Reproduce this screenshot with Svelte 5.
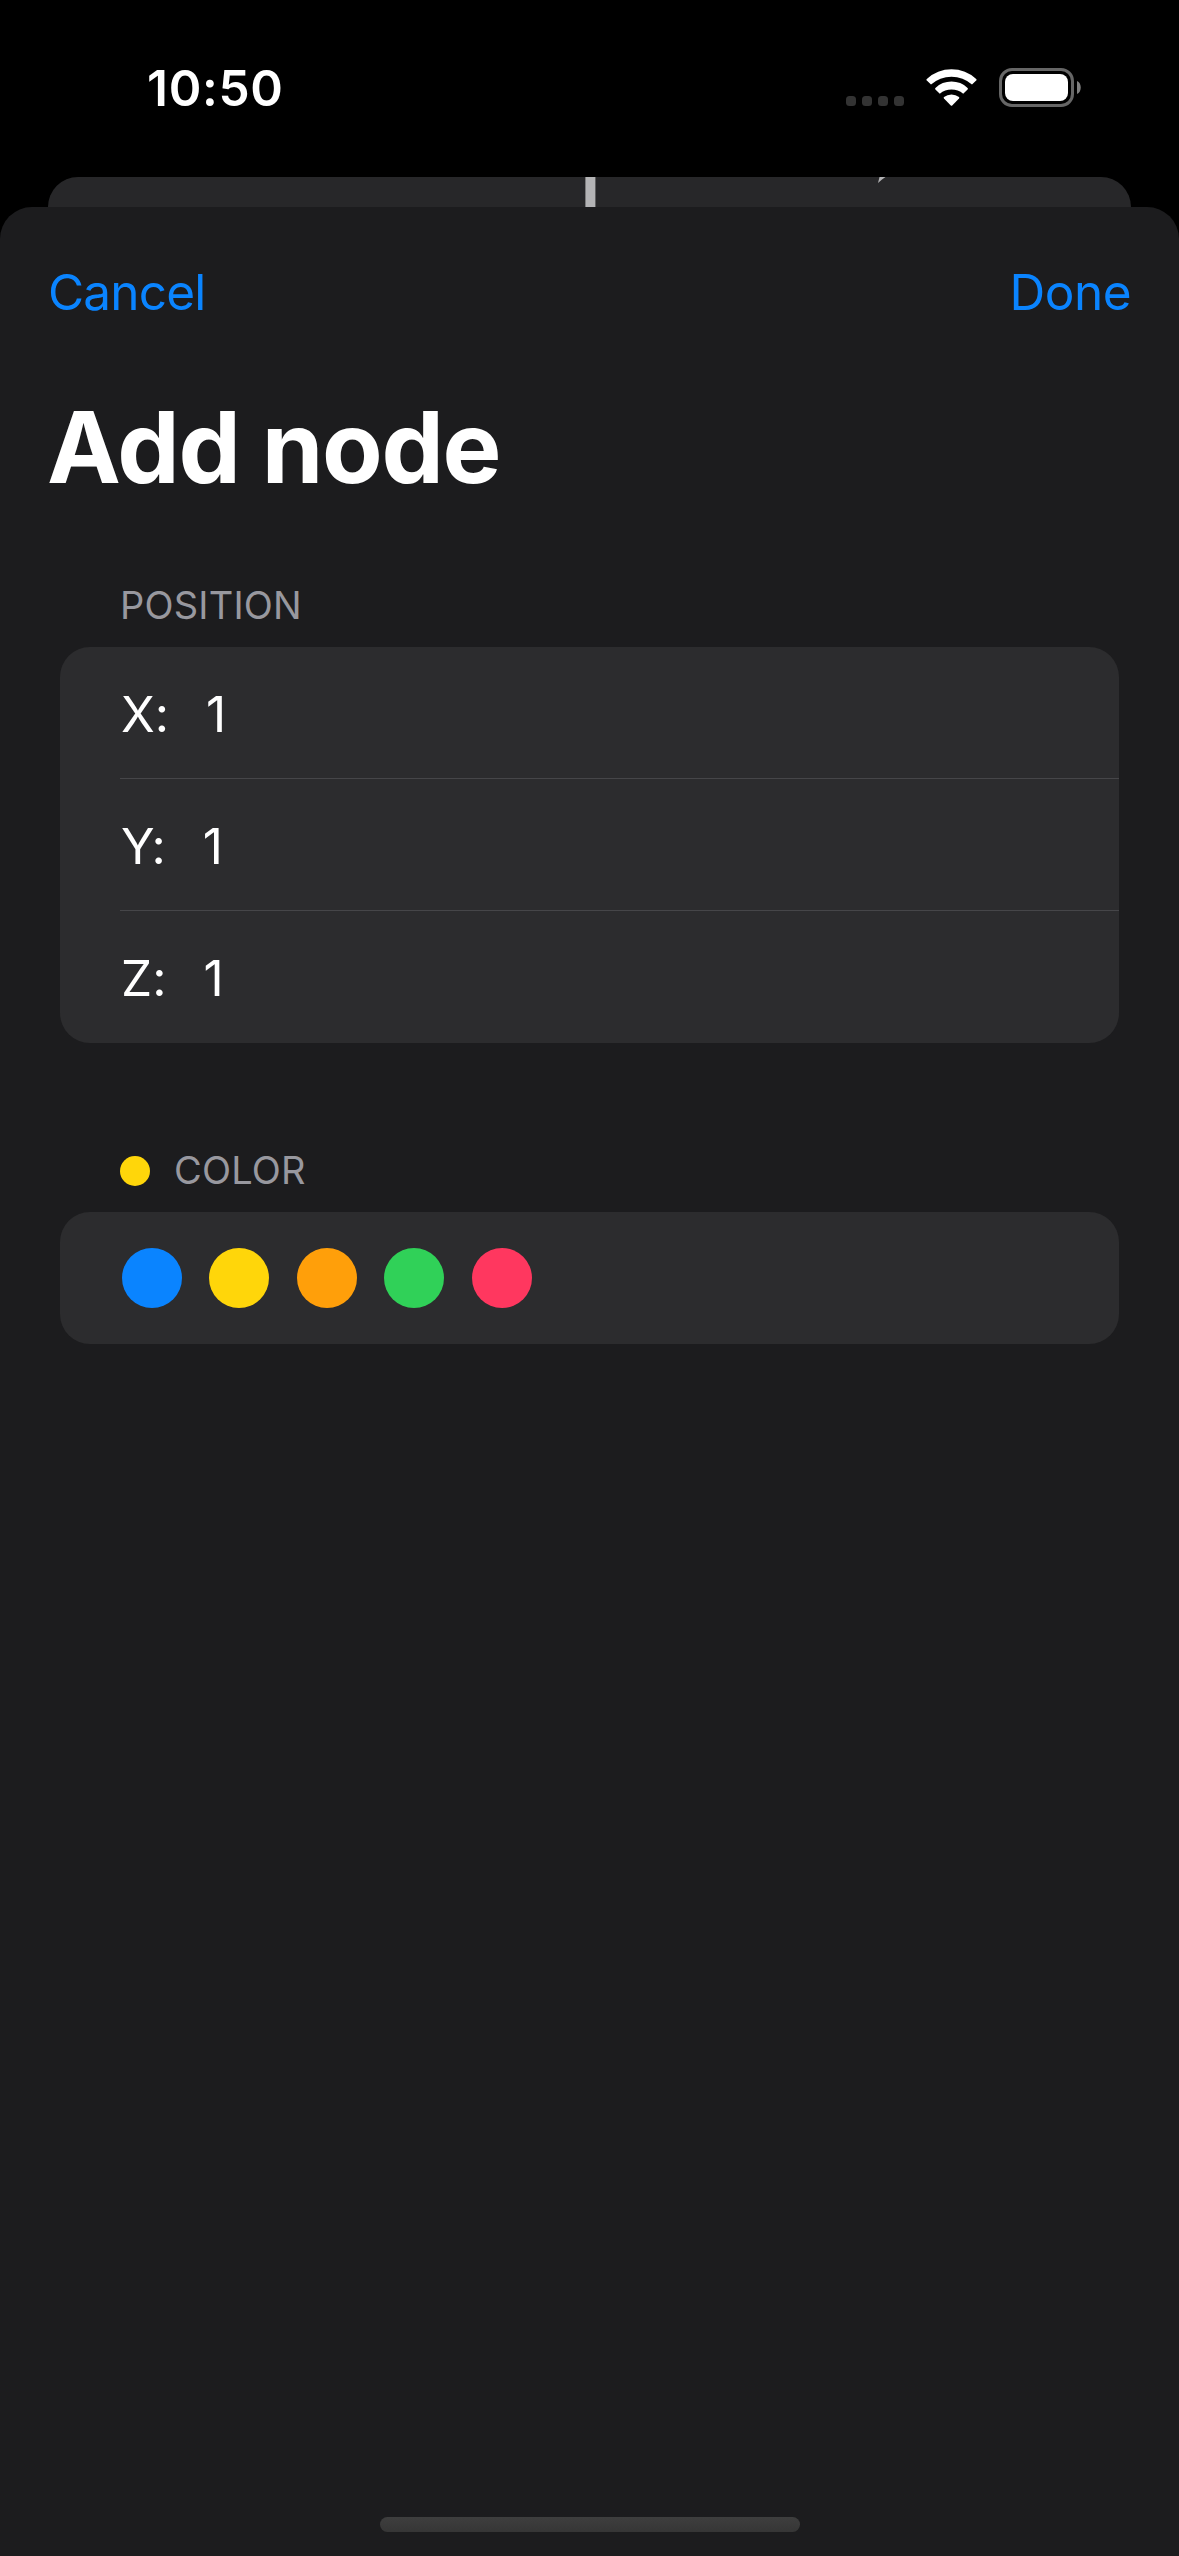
<script>
  let fields = $state([
    { label: 'X:', value: '1' },
    { label: 'Y:', value: '1' },
    { label: 'Z:', value: '1' }
  ]);
  const colors = ['blue', 'yellow', 'orange', 'green', 'pink'];
  let selected = $state('yellow');
</script>

<div class="screen">
  <header class="status">
    <span class="time">10:50</span>
    <div class="indicators">
      <div class="cellular"><i></i><i></i><i></i><i></i></div>
      <svg class="wifi" width="51" height="38" viewBox="0 0 51 38" fill="#fff">
        <path d="M.8 11.6Q0 10.8.8 10A36.5 36.5 0 0 1 50.2 10Q51 10.8 50.2 11.6L46 15.6A30.5 30.5 0 0 0 5 15.6Z" />
        <path d="M9.4 20.5Q8.7 19.8 9.4 19A22.9 22.9 0 0 1 41.6 19Q42.3 19.8 41.6 20.5L37.2 24.7A18.5 18.5 0 0 0 13.8 24.7Z" />
        <path d="M18 29.5Q17.3 28.7 18 28.1A12 12 0 0 1 33 28.1Q33.7 28.7 33 29.5L26.2 36.4Q25.5 37.1 24.8 36.4Z" />
      </svg>
      <svg class="battery" width="83" height="39" viewBox="0 0 83 39">
        <rect x="1.5" y="1.5" width="72" height="36" rx="11.5" fill="none" stroke="#666" stroke-width="3" />
        <rect x="6" y="6" width="63" height="27" rx="8" fill="#fff" />
        <path d="M78 13C83 15 83 24 78 26Z" fill="#808080" />
      </svg>
    </div>
  </header>

  <div class="backdrop">
    <svg width="1083" height="30" viewBox="0 0 1083 30">
      <rect x="537.4" y="0" width="10" height="30" fill="#b3b3b5" />
      <path d="M831.5 0H837.5L834 2.5L830 6Z" fill="#b3b3b5" />
    </svg>
  </div>

  <main class="sheet">
    <nav>
      <button class="cancel">Cancel</button>
      <button class="done">Done</button>
    </nav>
    <h1>Add node</h1>

    <section>
      <h2>POSITION</h2>
      <div class="card">
        {#each fields as field}
          <div class="row">
            <span class="label">{field.label}</span>
            <span class="value">{field.value}</span>
          </div>
        {/each}
      </div>
    </section>

    <section class="color">
      <h2><span class="dot {selected}"></span><span>COLOR</span></h2>
      <div class="card swatches">
        {#each colors as color}
          <button class="swatch {color}" aria-label={color} onclick={() => (selected = color)}></button>
        {/each}
      </div>
    </section>

    <div class="home"></div>
  </main>
</div>

<style>
  :global(body) {
    margin: 0;
    background: #000;
  }
  .screen {
    display: flex;
    flex-direction: column;
    width: 1179px;
    height: 2556px;
    overflow: hidden;
    background: #000;
    color: #fff;
    font-family: Inter, "Liberation Sans", sans-serif;
    font-size: 49.5px;
  }
  .status {
    display: flex;
    justify-content: space-between;
    align-items: flex-start;
    box-sizing: border-box;
    height: 177px;
    padding: 58px 97px 0 147px;
  }
  .time {
    font-weight: 600;
    line-height: 60px;
    letter-spacing: 0.7px;
  }
  .indicators {
    display: flex;
    align-items: flex-start;
    padding-top: 10px;
  }
  .cellular {
    display: flex;
    gap: 6px;
    margin: 28px 22px 0 0;
  }
  .cellular i {
    width: 10px;
    height: 10px;
    border-radius: 3.5px;
    background: #333;
  }
  .wifi {
    margin: 1px 22px 0 0;
  }
  .backdrop {
    height: 30px;
    margin: 0 48px;
    border-radius: 30px 30px 0 0;
    overflow: hidden;
    background: #272729;
  }
  .backdrop svg {
    display: block;
  }
  .sheet {
    flex: 1;
    display: flex;
    flex-direction: column;
    border-radius: 32px 32px 0 0;
    background: #1c1c1e;
  }
  nav {
    display: flex;
    justify-content: space-between;
    padding: 55px 48px 0 48px;
  }
  button {
    padding: 0;
    border: 0;
    background: none;
    font: inherit;
  }
  nav button {
    color: #0a84ff;
    line-height: 60px;
    letter-spacing: -0.8px;
  }
  .done {
    letter-spacing: -0.5px;
  }
  h1 {
    margin: 65px 47px 0;
    font-size: 99px;
    font-weight: 700;
    line-height: 120px;
    letter-spacing: -1.3px;
  }
  section {
    margin: 73px 60px 0;
  }
  h2 {
    display: flex;
    align-items: center;
    margin: 0 0 17px 60px;
    color: #98989f;
    font-size: 38px;
    font-weight: 400;
    line-height: 50px;
    letter-spacing: 0.2px;
  }
  .card {
    border-radius: 30px;
    background: #2c2c2e;
  }
  .row {
    display: flex;
    align-items: center;
    box-sizing: border-box;
    height: 132px;
    margin-left: 60px;
    padding-top: 1px;
    line-height: 60px;
  }
  .row + .row {
    border-top: 1px solid #464649;
    margin-top: -1px;
    height: 133px;
  }
  .label {
    margin: 0 37px 0 1px;
    font-feature-settings: "calt" 0;
  }
  .color {
    margin-top: 102px;
  }
  .dot {
    width: 30px;
    height: 30px;
    margin: 2px 24px 0 0;
    border-radius: 50%;
  }
  .swatches {
    display: flex;
    align-items: center;
    gap: 27.5px;
    height: 132px;
    padding-left: 61.9px;
  }
  .swatch {
    width: 60px;
    height: 60px;
    border-radius: 50%;
  }
  .blue { background: #0a84ff; }
  .yellow { background: #ffd60a; }
  .orange { background: #ff9f0a; }
  .green { background: #30d158; }
  .pink { background: #ff375f; }
  .home {
    width: 420px;
    height: 15px;
    margin: auto auto 24px 380px;
    border-radius: 8px;
    background: linear-gradient(#3e3e3e, #363636);
  }
</style>
